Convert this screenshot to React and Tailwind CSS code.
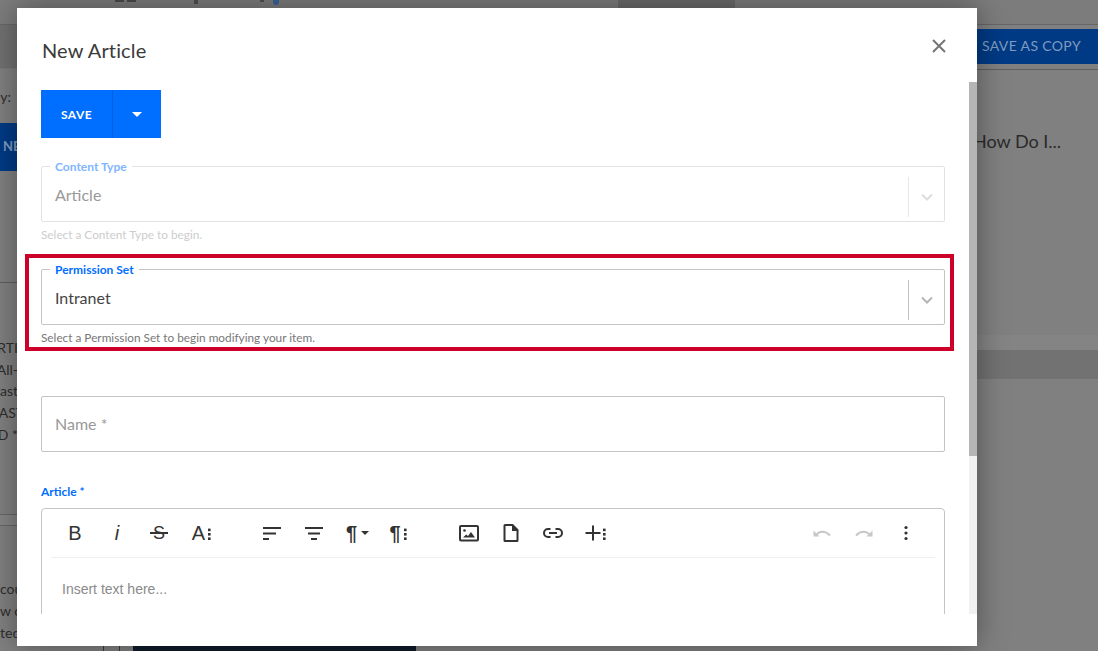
function Dots({ x = 19 }) {
  return (
    <g fill="currentColor">
      <rect x={x} y="7.6" width="2.6" height="2.6" />
      <rect x={x} y="12" width="2.6" height="2.6" />
      <rect x={x} y="16.4" width="2.6" height="2.6" />
    </g>
  );
}

function Ic({ children, className = "" }) {
  return (
    <svg width="24" height="24" viewBox="0 0 24 24" className={className} fill="none">
      {children}
    </svg>
  );
}

function Btn({ children, className = "" }) {
  return (
    <div className={`relative flex h-10 w-[42px] shrink-0 items-center justify-center text-[#333333] ${className}`}>
      {children}
    </div>
  );
}

function Glyph({ children, className = "" }) {
  return <span className={`font-['Liberation_Sans',sans-serif] leading-none ${className}`}>{children}</span>;
}

function Toolbar() {
  return (
    <div className="flex h-12 items-center justify-between pl-3 pr-[17px]">
      <div className="flex">
        <div className="mr-[29px] flex">
          <Btn><Glyph className="text-[20px]">B</Glyph></Btn>
          <Btn><Glyph className="text-[20px] italic">i</Glyph></Btn>
          <Btn>
            <Glyph className="text-[18px]">S</Glyph>
            <span className="absolute left-3 right-3 top-[19px] h-[2px] bg-[#333333]" />
          </Btn>
          <Btn>
            <Glyph className="-ml-[5px] text-[20px]">A</Glyph>
            <Ic className="absolute left-[9px] top-2"><Dots /></Ic>
          </Btn>
        </div>
        <div className="mr-[29px] flex">
          <Btn>
            <Ic><path d="M3 7h18M3 12.5h13M3 18h6" stroke="currentColor" strokeWidth="2" /></Ic>
          </Btn>
          <Btn>
            <Ic><path d="M3 7h18M6 12.5h12M9 18h6" stroke="currentColor" strokeWidth="2" /></Ic>
          </Btn>
          <Btn>
            <Glyph className="-ml-[9px] text-[20px] font-bold">¶</Glyph>
            <span className="absolute left-[26px] top-[18px] border-x-4 border-t-4 border-x-transparent border-t-[#333333]" />
          </Btn>
          <Btn>
            <Glyph className="-ml-[6px] text-[20px] font-bold">¶</Glyph>
            <Ic className="absolute left-[8px] top-2"><Dots /></Ic>
          </Btn>
        </div>
        <div className="flex">
          <Btn>
            <Ic>
              <rect x="3" y="5" width="18" height="14.5" rx="1" stroke="currentColor" strokeWidth="2" />
              <circle cx="7.5" cy="9.5" r="1.3" fill="currentColor" />
              <path d="M6 16.5l3.2-3 1.8 1.5 3-4 4 5.5z" fill="currentColor" />
            </Ic>
          </Btn>
          <Btn>
            <Ic>
              <path d="M5.5 4.5a.5.5 0 0 1 .5-.5h7.5l5 5v10.5a.5.5 0 0 1-.5.5H6a.5.5 0 0 1-.5-.5z" stroke="currentColor" strokeWidth="2" strokeLinejoin="round" />
              <path d="M13 4l6 6h-6z" fill="currentColor" />
            </Ic>
          </Btn>
          <Btn>
            <Ic>
              <path d="M9.5 8H7a4 4 0 0 0 0 8h2.5M14.5 8H17a4 4 0 0 1 0 8h-2.5M8 12h8" stroke="currentColor" strokeWidth="2" />
            </Ic>
          </Btn>
          <Btn>
            <Ic className="-ml-1"><path d="M12 4.5v15M4.5 12h15" stroke="currentColor" strokeWidth="2" /></Ic>
            <Ic className="absolute left-[9px] top-2"><Dots x={20} /></Ic>
          </Btn>
        </div>
      </div>
      <div className="flex">
        <Btn className="text-[#c8c8c8]">
          <Ic>
            <path d="M3.5 9.5v6h6z" fill="currentColor" />
            <path d="M6 14c3-4 9-5 14 .5" stroke="currentColor" strokeWidth="2" />
          </Ic>
        </Btn>
        <Btn className="text-[#c8c8c8]">
          <Ic>
            <path d="M20.5 9.5v6h-6z" fill="currentColor" />
            <path d="M18 14c-3-4-9-5-14 .5" stroke="currentColor" strokeWidth="2" />
          </Ic>
        </Btn>
        <Btn>
          <Ic>
            <circle cx="12" cy="6.5" r="1.6" fill="currentColor" />
            <circle cx="12" cy="12" r="1.6" fill="currentColor" />
            <circle cx="12" cy="17.5" r="1.6" fill="currentColor" />
          </Ic>
        </Btn>
      </div>
    </div>
  );
}

function SelectField({ label, value, help, disabled }) {
  return (
    <div>
      <fieldset className={`relative -mt-[7px] h-[63px] rounded-[2px] border pl-[8px] ${disabled ? "border-[#e2e2e2]" : "border-[#c4c4c4]"}`}>
        <legend className={`px-[5px] text-[12px] leading-[14px] font-bold ${disabled ? "text-[#80b6ff]" : "text-[#006eff]"}`}>
          <span className="relative top-px">{label}</span>
        </legend>
        <div className="flex h-[48px] items-center">
          <div className={`flex-1 pb-1 pl-[5px] text-[16px] ${disabled ? "text-[#999999]" : "text-[#444444]"}`}>{value}</div>
          <div className={`h-10 w-px ${disabled ? "bg-[#e8e8e8]" : "bg-[#c4c4c4]"}`} />
          <div className="flex w-[35px] items-center justify-center">
            <svg width="14" height="10" viewBox="0 0 14 10" fill="none">
              <path d="M2 2.5l5 5 5-5" stroke={disabled ? "#dddddd" : "#b5b5b5"} strokeWidth="2" />
            </svg>
          </div>
        </div>
      </fieldset>
      <p className={`mt-[6px] text-[11.8px] leading-[14px] ${disabled ? "text-[#cccccc]" : "text-[#777777]"}`}>{help}</p>
    </div>
  );
}

function Background() {
  return (
    <div className="flex h-full w-full flex-col overflow-hidden bg-[#808080] font-['Lato',sans-serif]">
      <div className="relative flex h-[25px] shrink-0 border-b border-[#666666] bg-[#7c7c7c]">
        <div className="ml-[115px] flex h-[3px] items-start gap-[3px]">
          <span className="h-[2px] w-[9px] bg-[#4a4a4a]" />
          <span className="h-[2px] w-[9px] bg-[#4a4a4a]" />
          <span className="ml-[55px] h-[4px] w-[4px] bg-[#4f4f4f]" />
          <span className="ml-[59px] h-[2px] w-[4px] bg-[#4f4f4f]" />
          <span className="ml-[6px] h-[5px] w-[6px] rounded-b-full bg-[#3a6198]" />
        </div>
        <div className="absolute left-[618px] top-0 h-[8px] w-[117px] bg-[#6a6a6a]" />
      </div>
      <div className="flex min-h-0 flex-1">
        <div className="w-[60px] shrink-0 overflow-hidden whitespace-nowrap text-[14px] text-[#2e2e2e]">
          <div className="h-[44px] border-b border-[#7a7a7a] bg-[#717171]" />
          <div className="flex h-[54px] items-center justify-end pr-[49px]">y:</div>
          <div className="flex h-12 items-center bg-[#003a85] pl-[3px] text-[13px] font-bold text-[#7f9cc0]">NEW</div>
          <div className="h-[112px] border-b border-[#5e5e5e]" />
          <div className="mt-[54px] flex flex-col items-end pr-[42px] leading-[21.7px]">
            <span>ARTI</span>
            <span>All-</span>
            <span>Past</span>
            <span className="-mr-[6px]">LAST</span>
            <span>ID *</span>
          </div>
          <div className="mt-[68px] h-[12px] border-y border-[#656565] bg-[#858585]" />
          <div className="mt-[52px] flex flex-col leading-[22px]">
            <span>cou</span>
            <span>w o</span>
            <span>ted</span>
          </div>
        </div>
        <div className="flex flex-1 flex-col justify-end">
          <div className="ml-[43px] flex h-[5px]">
            <span className="w-px bg-[#3c3c3c]" />
            <span className="ml-[15px] w-px bg-[#3c3c3c]" />
            <span className="ml-[13px] w-[283px] bg-[#0f1c2a]" />
          </div>
        </div>
        <div className="w-[121px] shrink-0 overflow-hidden whitespace-nowrap">
          <div className="mt-[4px] flex h-[35px] items-center bg-[#003a85] pb-[2px] pl-[5px] text-[14px] tracking-[0.35px] text-[#7f9cc0]">SAVE AS COPY</div>
          <div className="mt-[5px] border-t border-[#5e5e5e]" />
          <div className="-ml-1 mt-[59px] text-[18px] leading-6 text-[#2a2a2a]">How Do I...</div>
          <div className="mt-[182px] h-[15px] bg-[#848484]" />
          <div className="h-[29px] bg-[#727272]" />
        </div>
      </div>
    </div>
  );
}

export default function App() {
  return (
    <div className="relative h-[651px] w-[1098px] overflow-hidden font-['Lato',sans-serif]">
      <Background />
      <div className="absolute left-[17px] top-[8px] flex h-[638px] w-[960px] flex-col bg-white shadow-[0_0_28px_rgba(0,0,0,0.38)]">
        <div className="relative h-[74px] shrink-0 pl-[25px] pt-[29px]">
          <h2 className="text-[20px] leading-[26px] tracking-[0.15px] font-normal text-[#3a3a3a]">New Article</h2>
          <svg className="absolute right-[30px] top-[30px]" width="16" height="16" viewBox="0 0 16 16" fill="none">
            <path d="M2 2l12 12M14 2L2 14" stroke="#757575" strokeWidth="2" />
          </svg>
        </div>
        <div className="flex min-h-0 flex-1">
          <div className="min-w-0 flex-1 overflow-hidden px-6 pt-2">
            <div className="flex h-12 w-[120px] bg-[#006eff] text-white">
              <div className="flex w-[72px] items-center justify-center border-r border-[#0060dd] pt-[2px] text-[12px] font-bold tracking-[0.4px]">SAVE</div>
              <div className="flex flex-1 items-center justify-center">
                <span className="border-x-[5px] border-t-[5px] border-x-transparent border-t-white" />
              </div>
            </div>
            <div className="mt-7">
              <SelectField disabled label="Content Type" value="Article" help="Select a Content Type to begin." />
            </div>
            <div className="relative mt-[27px]">
              <div className="absolute -left-4 -right-[9px] -top-[8px] h-[97px] border-4 border-[#cc0028]" />
              <SelectField label="Permission Set" value="Intranet" help="Select a Permission Set to begin modifying your item." />
            </div>
            <div className="mt-[51px] flex h-14 items-center rounded-[2px] border border-[#c4c4c4] pl-[13px] text-[16px] text-[#999999]">Name *</div>
            <div className="mt-[33px] text-[12px] leading-[14px] font-bold text-[#006eff]">Article *</div>
            <div className="mt-[9px] h-[200px] rounded-t-[4px] border border-[#c4c4c4] px-[9px]">
              <div className="-mx-[9px]"><Toolbar /></div>
              <div className="border-t border-[#efefef]" />
              <div className="pl-[11px] pt-[22px] font-['Liberation_Sans',sans-serif] text-[14px] leading-[18px] text-[#8a8a8a]">Insert text here...</div>
            </div>
          </div>
          <div className="w-2 shrink-0 bg-[#f1f1f1]">
            <div className="h-[374px] bg-[#b5b5b5]" />
          </div>
        </div>
        <div className="h-[32px] shrink-0" />
      </div>
    </div>
  );
}
